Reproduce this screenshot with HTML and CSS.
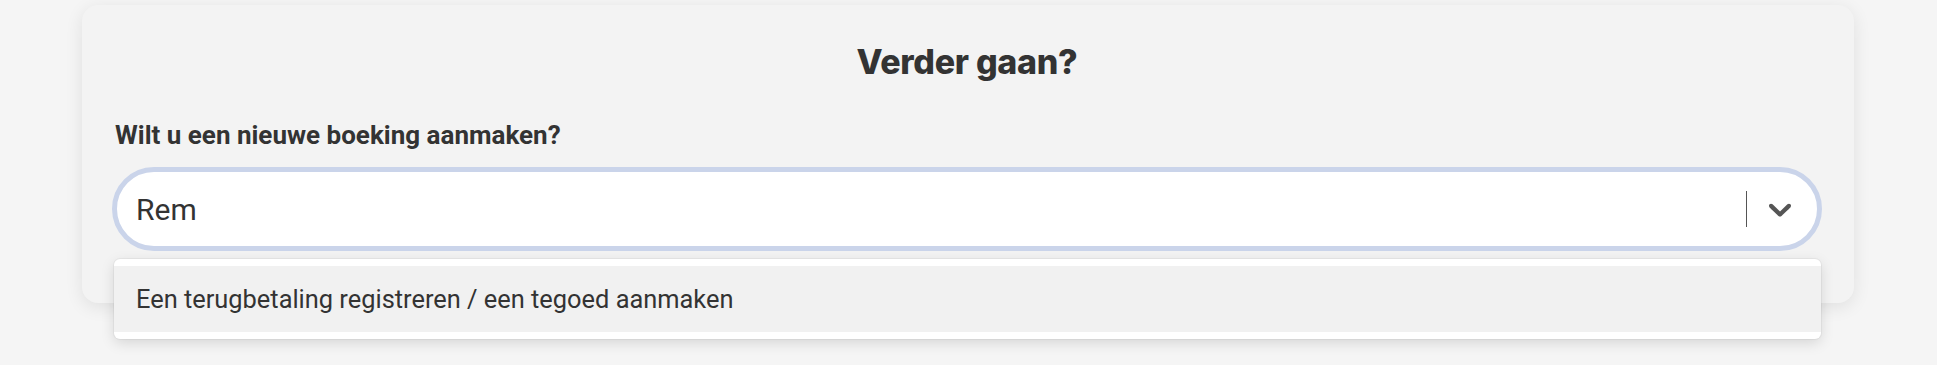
FILE: index.html
```html
<!DOCTYPE html>
<html>

<head>
    <meta charset="UTF-8">
    <title>Verder gaan?</title>
    <link rel="stylesheet" href="styles.css">
</head>

<body>

    <div id="page">
        <div class="card">
            <h2 class="card_title">Verder gaan?</h2>
            <div class="field_label">Wilt u een nieuwe boeking aanmaken?</div>

            <div class="select">
                <div class="select_control">
                    <div class="select_value">Rem</div>
                    <div class="select_indicators">
                        <span class="select_sep"></span>
                        <div class="select_arrow">
                            <svg viewBox="0 0 20 20" width="38" height="38">
                                <path d="M4.516 7.548c0.436-0.446 1.043-0.481 1.576 0l3.908 3.747 3.908-3.747c0.533-0.481 1.141-0.446 1.574 0 0.436 0.445 0.408 1.197 0 1.615-0.406 0.418-4.695 4.502-4.695 4.502-0.217 0.223-0.502 0.335-0.787 0.335s-0.57-0.112-0.789-0.335c0 0-4.287-4.084-4.695-4.502s-0.436-1.17 0-1.615z" fill="currentColor"></path>
                            </svg>
                        </div>
                    </div>
                </div>

                <!-- dropdown menu -->
                <div class="select_menu">
                    <div class="select_option focused">Een terugbetaling registreren / een tegoed aanmaken</div>
                </div>
            </div>
        </div>
    </div>

</body>

</html>
```

FILE: styles.css
```css
* {
    box-sizing: border-box;
}

body {
    margin: 0;
    min-height: 100vh;
    background-color: #f5f5f5;
    font-family: Roboto, "Liberation Sans", sans-serif;
    color: #333;
}

#page {
    min-height: 100vh;
    padding: 5px 83px 0 82px;
}

.card {
    background-color: #f3f3f3;
    border-radius: 16px;
    box-shadow: 0 4px 18px rgba(0, 0, 0, 0.09);
    padding: 36px 32px 52px 30px;
}

.card_title {
    margin: 0 0 36px 0;
    text-align: center;
    font-family: Inter, "Noto Sans", sans-serif;
    font-weight: 800;
    font-size: 34px;
    line-height: 42px;
    color: #333;
    letter-spacing: -0.3px;
}

.field_label {
    font-weight: 700;
    font-size: 26px;
    line-height: 32px;
    margin: 0 0 16px 3px;
    color: #333;
}

.select {
    position: relative;
}

.select_control {
    display: flex;
    align-items: center;
    height: 84px;
    background-color: #fff;
    border: 5px solid #cad4ea;
    border-radius: 42px;
    padding: 0 18px 0 19px;
}

.select_value {
    flex: 1;
    font-size: 30px;
    color: #333;
}

.select_indicators {
    display: flex;
    align-items: center;
}

.select_sep {
    width: 1px;
    height: 36px;
    background-color: #555;
}

.select_arrow {
    display: flex;
    color: #555;
    margin-left: 14px;
}

/* dropdown */

.select_menu {
    position: absolute;
    top: 92px;
    left: 2px;
    right: 1px;
    z-index: 10;
    background-color: #fff;
    border-radius: 6px;
    box-shadow: 0 4px 14px rgba(0, 0, 0, 0.13), 0 0 0 1px rgba(0, 0, 0, 0.04);
    padding: 7px 0;
}

.select_option {
    padding: 0 22px;
    height: 66px;
    line-height: 66px;
    font-size: 25.4px;
    color: #333;
}

.select_option.focused {
    background-color: #f1f1f1;
}
```
